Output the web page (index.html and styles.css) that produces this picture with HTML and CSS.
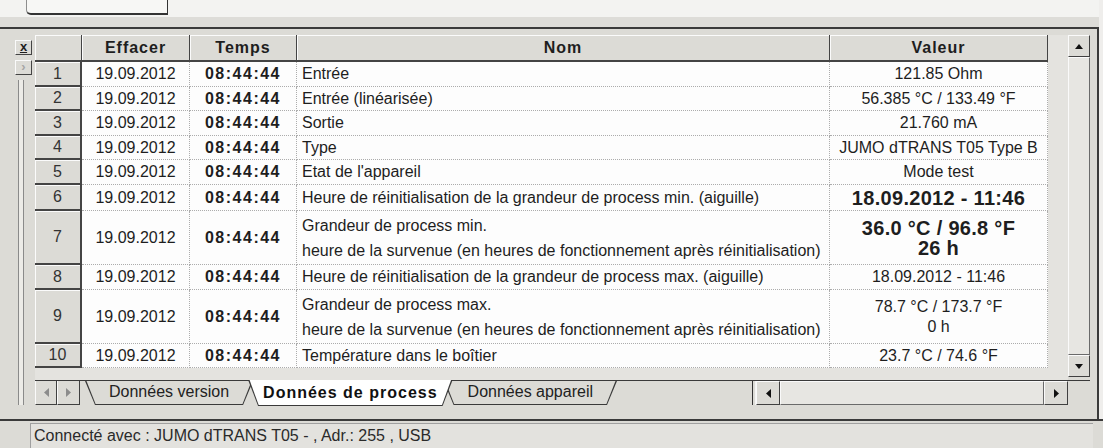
FILE: index.html
```html
<!DOCTYPE html>
<html lang="fr">
<head>
    <meta charset="UTF-8">
    <title>Données de process</title>
    <link rel="stylesheet" href="styles.css">
</head>
<body>
    <div class="topbar"><div class="tabstub"></div></div>

    <div class="panel">
        <div class="side">
            <div class="mini-btn close">x</div>
            <div class="mini-btn next">›</div>
            <div class="splitter"></div>
        </div>

        <div class="content">
            <div class="sheet">
                <div class="grid">
                    <table>
                        <colgroup>
                            <col class="c-num"><col class="c-date"><col class="c-time"><col class="c-name"><col class="c-value">
                        </colgroup>
                        <thead>
                            <tr>
                                <th></th>
                                <th>Effacer</th>
                                <th>Temps</th>
                                <th>Nom</th>
                                <th>Valeur</th>
                            </tr>
                        </thead>
                        <tbody>
                            <tr class="r25">
                                <td class="num">1</td><td>19.09.2012</td><td class="time">08:44:44</td>
                                <td class="name">Entrée</td><td>121.85 Ohm</td>
                            </tr>
                            <tr class="r24">
                                <td class="num">2</td><td>19.09.2012</td><td class="time">08:44:44</td>
                                <td class="name">Entrée (linéarisée)</td><td>56.385 °C / 133.49 °F</td>
                            </tr>
                            <tr class="r25">
                                <td class="num">3</td><td>19.09.2012</td><td class="time">08:44:44</td>
                                <td class="name">Sortie</td><td>21.760 mA</td>
                            </tr>
                            <tr class="r24">
                                <td class="num">4</td><td>19.09.2012</td><td class="time">08:44:44</td>
                                <td class="name">Type</td><td>JUMO dTRANS T05 Type B</td>
                            </tr>
                            <tr class="r25">
                                <td class="num">5</td><td>19.09.2012</td><td class="time">08:44:44</td>
                                <td class="name">Etat de l'appareil</td><td>Mode test</td>
                            </tr>
                            <tr class="r26">
                                <td class="num">6</td><td>19.09.2012</td><td class="time">08:44:44</td>
                                <td class="name">Heure de réinitialisation de la grandeur de process min. (aiguille)</td>
                                <td class="big">18.09.2012 - 11:46</td>
                            </tr>
                            <tr class="tall">
                                <td class="num">7</td><td>19.09.2012</td><td class="time">08:44:44</td>
                                <td class="name">Grandeur de process min.<br>heure de la survenue (en heures de fonctionnement après réinitialisation)</td>
                                <td class="big two">36.0 °C / 96.8 °F<br>26 h</td>
                            </tr>
                            <tr class="r25">
                                <td class="num">8</td><td>19.09.2012</td><td class="time">08:44:44</td>
                                <td class="name">Heure de réinitialisation de la grandeur de process max. (aiguille)</td>
                                <td>18.09.2012 - 11:46</td>
                            </tr>
                            <tr class="tall">
                                <td class="num">9</td><td>19.09.2012</td><td class="time">08:44:44</td>
                                <td class="name">Grandeur de process max.<br>heure de la survenue (en heures de fonctionnement après réinitialisation)</td>
                                <td class="two">78.7 °C / 173.7 °F<br>0 h</td>
                            </tr>
                            <tr class="r24">
                                <td class="num">10</td><td>19.09.2012</td><td class="time">08:44:44</td>
                                <td class="name">Température dans le boîtier</td><td>23.7 °C / 74.6 °F</td>
                            </tr>
                        </tbody>
                    </table>
                </div>

                <div class="vscroll">
                    <div class="sb-btn">
                        <svg width="8" height="5" viewBox="0 0 8 5"><polygon points="4,0 8,5 0,5" fill="#111"/></svg>
                    </div>
                    <div class="sb-thumb"></div>
                    <div class="sb-btn">
                        <svg width="8" height="5" viewBox="0 0 8 5"><polygon points="0,0 8,0 4,5" fill="#111"/></svg>
                    </div>
                </div>
            </div>

            <div class="bottom">
                <div class="tab-nav">
                    <div class="nav-btn">
                        <svg width="5" height="9" viewBox="0 0 5 9"><polygon points="5,0 5,9 0,4.5" fill="#8c8c8c"/></svg>
                    </div>
                    <div class="nav-btn">
                        <svg width="5" height="9" viewBox="0 0 5 9"><polygon points="0,0 5,4.5 0,9" fill="#8c8c8c"/></svg>
                    </div>
                </div>
                <div class="tabs">
                    <div class="tab first"><span>Données version</span></div>
                    <div class="tab active"><span>Données de process</span></div>
                    <div class="tab last"><span>Données appareil</span></div>
                </div>
                <div class="split"></div>
                <div class="hscroll">
                    <div class="hs-btn">
                        <svg width="5" height="9" viewBox="0 0 5 9"><polygon points="5,0 5,9 0,4.5" fill="#111"/></svg>
                    </div>
                    <div class="hs-thumb"></div>
                    <div class="hs-btn">
                        <svg width="5" height="9" viewBox="0 0 5 9"><polygon points="0,0 5,4.5 0,9" fill="#111"/></svg>
                    </div>
                </div>
                <div class="corner"></div>
            </div>
        </div>
    </div>

    <div class="status">
        <div class="status-text">Connecté avec : JUMO dTRANS T05 - , Adr.: 255 , USB</div>
    </div>
</body>
</html>
```

FILE: styles.css
```css
* {
    box-sizing: border-box;
}
body {
    margin: 0;
    width: 1103px;
    height: 448px;
    overflow: hidden;
    background-color: #efeeec;
    font-family: "Liberation Sans", Arial, sans-serif;
    font-size: 16px;
    color: #1e1e1e;
}

/* window top, the edge of the frame above */
.topbar {
    width: 1099px;
    height: 29px;
    padding-left: 26px;
    border-bottom: 2px solid #3a3a3a;
    background: linear-gradient(#f3f3f1 0 17px, #dddcd8 17px);
}
.tabstub {
    width: 142px;
    height: 15px;
    background-color: #f7f7f5;
    border-left: 1px solid #8d8d8d;
    border-right: 1px solid #333;
    border-bottom: 2px solid #333;
    border-bottom-left-radius: 5px;
}

.panel {
    display: flex;
    width: 1099px;
    height: 390px;
    padding: 6px 7px 14px 0;
    background-color: #dcdbd6;
    border-right: 2px solid #3a3a3a;
}

/* left strip with the small buttons */
.side {
    width: 35px;
    display: flex;
    flex-direction: column;
    align-items: flex-start;
    gap: 5px;
    padding: 5px 0 0 15px;
}
.mini-btn {
    width: 17px;
    height: 15px;
    font-size: 13px;
    line-height: 12px;
    text-align: center;
    background-color: #dcdbd6;
    border: 1px solid;
    border-color: #fafafa #444 #444 #fafafa;
}
.mini-btn.close {
    font-weight: bold;
    text-decoration: underline;
}
.mini-btn.next {
    color: #a5a5a5;
    font-weight: bold;
}
.splitter {
    flex: 1;
    width: 6px;
    margin-left: 3px;
    border-left: 1px solid #8a8a8a;
    border-right: 1px solid #8a8a8a;
    background-color: #ecebe7;
}

.content {
    width: 1055px;
    display: flex;
    flex-direction: column;
}
.sheet {
    display: flex;
    height: 345px;
}
.grid {
    width: 1033px;
    height: 345px;
    overflow: hidden;
    background-color: #e4e3df;
}

table {
    table-layout: fixed;
    width: 1013px;
    border-collapse: separate;
    border-spacing: 0;
}
.c-num { width: 47px; }
.c-date { width: 108px; }
.c-time { width: 107px; }
.c-name { width: 533px; }
.c-value { width: 218px; }

th {
    height: 27px;
    padding: 0;
    font-weight: bold;
    letter-spacing: 1px;
    text-align: center;
    background-color: #dcdbd6;
    border-right: 1px solid #444;
    border-bottom: 2px solid #444;
    box-shadow: inset 1px 1px #fbfbfb;
}
td {
    padding: 0 4px;
    text-align: center;
    vertical-align: middle;
    white-space: nowrap;
    overflow: hidden;
    line-height: 20px;
    background-color: #fdfdfd;
    border-right: 1px dotted #acacac;
    border-bottom: 1px dotted #acacac;
}
tr.r24 { height: 24px; }
tr.r25 { height: 25px; }
tr.r26 { height: 26px; }
tr.tall { height: 54px; }

td.num {
    color: #333;
    background-color: #dcdbd6;
    border-right: 2px solid #444;
    border-bottom: 2px solid #444;
    box-shadow: inset 1px 1px #fbfbfb;
}
td.time {
    font-weight: bold;
    letter-spacing: 1.5px;
}
td.name {
    text-align: left;
    padding-left: 5px;
}
tr.tall td.name {
    line-height: 25px;
}
td.big {
    font-size: 20px;
    font-weight: bold;
    letter-spacing: 0.3px;
}
td.two {
    line-height: 20px;
}

/* vertical scroll bar */
.vscroll {
    width: 22px;
    height: 342px;
    display: flex;
    flex-direction: column;
    background-color: #ecebe7;
}
.sb-btn, .hs-btn, .nav-btn {
    display: flex;
    align-items: center;
    justify-content: center;
    background-color: #dcdbd6;
    border: 1px solid;
    border-color: #fafafa #404040 #404040 #fafafa;
}
.sb-btn {
    height: 22px;
}
.sb-thumb {
    flex: 1;
    background-color: #e7e6e2;
    border: 1px solid;
    border-color: #fafafa #6a6a6a #6a6a6a #fafafa;
}

/* sheet tabs and horizontal scroll bar */
.bottom {
    display: flex;
    height: 25px;
    border-top: 1px solid #3a3a3a;
}
.tab-nav {
    display: flex;
    width: 45px;
}
.nav-btn {
    width: 22px;
    height: 24px;
    border-top: 0;
}
.nav-btn + .nav-btn {
    width: 23px;
}
.tabs {
    display: flex;
    padding-left: 5px;
}
.tab {
    position: relative;
    z-index: 1;
    height: 24px;
    padding: 0 24px;
    line-height: 22px;
    white-space: nowrap;
    color: #222;
    background-color: #3a3a3a;
    clip-path: polygon(0 0, 10px 100%, calc(100% - 10px) 100%, 100% 0);
}
.tab::before {
    content: "";
    position: absolute;
    inset: 0;
    background-color: #dcdbd6;
    clip-path: polygon(1.5px 0, 10.6px calc(100% - 1px), calc(100% - 10.6px) calc(100% - 1px), calc(100% - 1.5px) 0);
}
.tab span {
    position: relative;
}
.tab.active {
    z-index: 2;
    height: 26px;
    margin: -1px 0 0 -5px;
    padding: 0 15px;
    line-height: 25px;
    font-weight: bold;
    letter-spacing: 1px;
    color: #111;
}
.tab.active::before {
    background-color: #ffffff;
}
.tab.last {
    margin-left: -9px;
}
.split {
    margin-left: auto;
    width: 4px;
    height: 24px;
    border-left: 1px solid #333;
    border-right: 1px solid #f5f5f5;
}
.hscroll {
    display: flex;
    width: 312px;
    height: 24px;
    background-color: #ecebe7;
}
.hs-btn {
    width: 24px;
}
.hs-thumb {
    flex: 1;
    background-color: #e7e6e2;
    border: 1px solid;
    border-color: #fafafa #6a6a6a #6a6a6a #fafafa;
}
.corner {
    width: 22px;
}

/* status bar */
.status {
    width: 1103px;
    height: 29px;
    padding: 2px 10px 0 30px;
    background-color: #dcdbd6;
    border-top: 2px solid #3a3a3a;
}
.status-text {
    height: 100%;
    padding-left: 3px;
    line-height: 24px;
    color: #2a2a2a;
    background-color: #e3e2de;
    border-left: 1px solid #a0a0a0;
    border-top: 1px solid #a0a0a0;
}
```
